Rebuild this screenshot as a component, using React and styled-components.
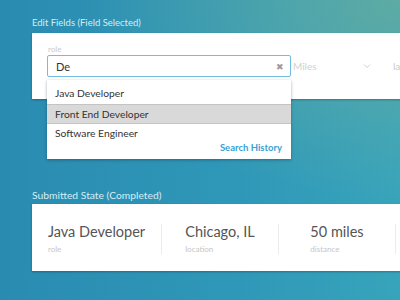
import React from 'react';
import styled, { createGlobalStyle } from 'styled-components';

/***************************************
  GLOBAL
***************************************/

const GlobalStyle = createGlobalStyle`
  html, body {
    margin: 0;
    padding: 0;
  }
  body {
    width: 400px;
    height: 300px;
    overflow: hidden;
    font-family: Lato, "Open Sans", sans-serif;
  }
`;

/***************************************
  COMPONENTS
***************************************/

const Page = styled.div`
  position: relative;
  width: 400px;
  height: 300px;
  overflow: hidden;
  padding-left: 32px;
  box-sizing: border-box;
  background:
    radial-gradient(ellipse 320px 200px at 100% 0%, rgba(100, 172, 160, 0.85), rgba(100, 172, 160, 0) 100%),
    linear-gradient(90deg, #2a8bb1 0%, #2f98b8 60%, #38a4bb 100%);
`;

const SectionTitle = styled.div`
  height: ${(p) => p.h}px;
  padding-top: ${(p) => p.top}px;
  box-sizing: border-box;
  font-size: ${(p) => p.size}px;
  line-height: 12px;
  color: #d4eef4;
  white-space: nowrap;
`;

const Card = styled.div`
  position: relative;
  width: 400px;
  height: ${(p) => p.h}px;
  background: #fff;
  box-shadow: 0 1px 2px rgba(0, 40, 60, 0.35);
  box-sizing: border-box;
`;

const EditRow = styled.div`
  display: flex;
  align-items: flex-end;
  padding: 11px 0 0 15px;
`;

const Field = styled.div`
  display: flex;
  flex-direction: column;
`;

const FieldLabel = styled.div`
  font-size: 8px;
  line-height: 10px;
  height: 11px;
  padding-left: 1px;
  color: #c9c9c9;
`;

const InputBox = styled.div`
  display: flex;
  align-items: center;
  justify-content: space-between;
  width: 244px;
  height: 22px;
  box-sizing: border-box;
  padding: 0 6px 0 8px;
  border: 1px solid #72bde0;
  border-radius: 2px;
  font-size: 11px;
  color: #333;
`;

const Clear = styled.span`
  font-size: 9px;
  color: #9a9a9a;
`;

const SelectBox = styled.div`
  display: flex;
  align-items: center;
  justify-content: space-between;
  width: 78px;
  height: 22px;
  padding-left: 2px;
  font-size: 10px;
  color: #d0d0d0;
`;

const NextField = styled.div`
  height: 22px;
  display: flex;
  align-items: center;
  padding-left: 22px;
  font-size: 10px;
  color: #c9c9c9;
`;

const Dropdown = styled.div`
  position: absolute;
  left: 15px;
  top: 47px;
  width: 244px;
  height: 79px;
  padding-top: 4px;
  box-sizing: border-box;
  background: #fff;
  box-shadow: 0 1px 3px rgba(0, 30, 50, 0.35);
  z-index: 2;
`;

const Option = styled.div`
  height: 20px;
  line-height: 19px;
  padding-left: 8px;
  font-size: 10.3px;
  color: #333;
  background: ${(p) => (p.active ? '#d9d9d9' : 'transparent')};
  border-top: ${(p) => (p.active ? '1px solid #c4c4c4' : 'none')};
  border-bottom: ${(p) => (p.active ? '1px solid #c4c4c4' : 'none')};
  box-sizing: border-box;
`;

const HistoryLink = styled.div`
  text-align: right;
  padding-right: 9px;
  margin-top: -2px;
  font-size: 9.5px;
  font-weight: 700;
  line-height: 12px;
  color: #3a9fd6;
`;

const SummaryRow = styled.div`
  display: flex;
  align-items: center;
  height: 100%;
  padding-top: 3px;
  box-sizing: border-box;
`;

const Column = styled.div`
  display: flex;
  justify-content: center;
  width: ${(p) => p.w}px;
  height: 30px;
  align-items: center;
  border-right: 1px solid #ececec;
  flex-shrink: 0;
`;

const Value = styled.div`
  font-size: 14.5px;
  line-height: 18px;
  color: #555;
  white-space: nowrap;
`;

const ValueLabel = styled.div`
  font-size: 8px;
  line-height: 11px;
  margin-top: 3px;
  color: #c6c6c6;
`;

/***************************************
  MAIN
***************************************/

const Chevron = () => (
  <svg width="8" height="6" viewBox="0 0 8 6">
    <path d="M1 1.5 L4 4.5 L7 1.5" fill="none" stroke="#cfcfcf" strokeWidth="1" />
  </svg>
);

const summary = [
  { value: 'Java Developer', label: 'role', w: 129 },
  { value: 'Chicago, IL', label: 'location', w: 116 },
  { value: '50 miles', label: 'distance', w: 116 },
  { value: '', label: '', w: 60 },
];

const App = () => (
  <>
    <GlobalStyle />
    <Page>
      <SectionTitle h={33} top={17} size={9.5}>Edit Fields (Field Selected)</SectionTitle>
      <Card h={66}>
        <EditRow>
          <Field>
            <FieldLabel>role</FieldLabel>
            <InputBox>
              <span>De</span>
              <Clear>✖</Clear>
            </InputBox>
          </Field>
          <SelectBox>
            <span>Miles</span>
            <Chevron />
          </SelectBox>
          <NextField>la</NextField>
        </EditRow>
        <Dropdown>
          <Option>Java Developer</Option>
          <Option active>Front End Developer</Option>
          <Option>Software Engineer</Option>
          <HistoryLink>Search History</HistoryLink>
        </Dropdown>
      </Card>
      <SectionTitle h={105} top={90} size={10.3}>Submitted State (Completed)</SectionTitle>
      <Card h={67}>
        <SummaryRow>
          {summary.map((s, i) => (
            <Column key={i} w={s.w}>
              <div>
                <Value>{s.value}</Value>
                <ValueLabel>{s.label}</ValueLabel>
              </div>
            </Column>
          ))}
        </SummaryRow>
      </Card>
    </Page>
  </>
);

export default App;
